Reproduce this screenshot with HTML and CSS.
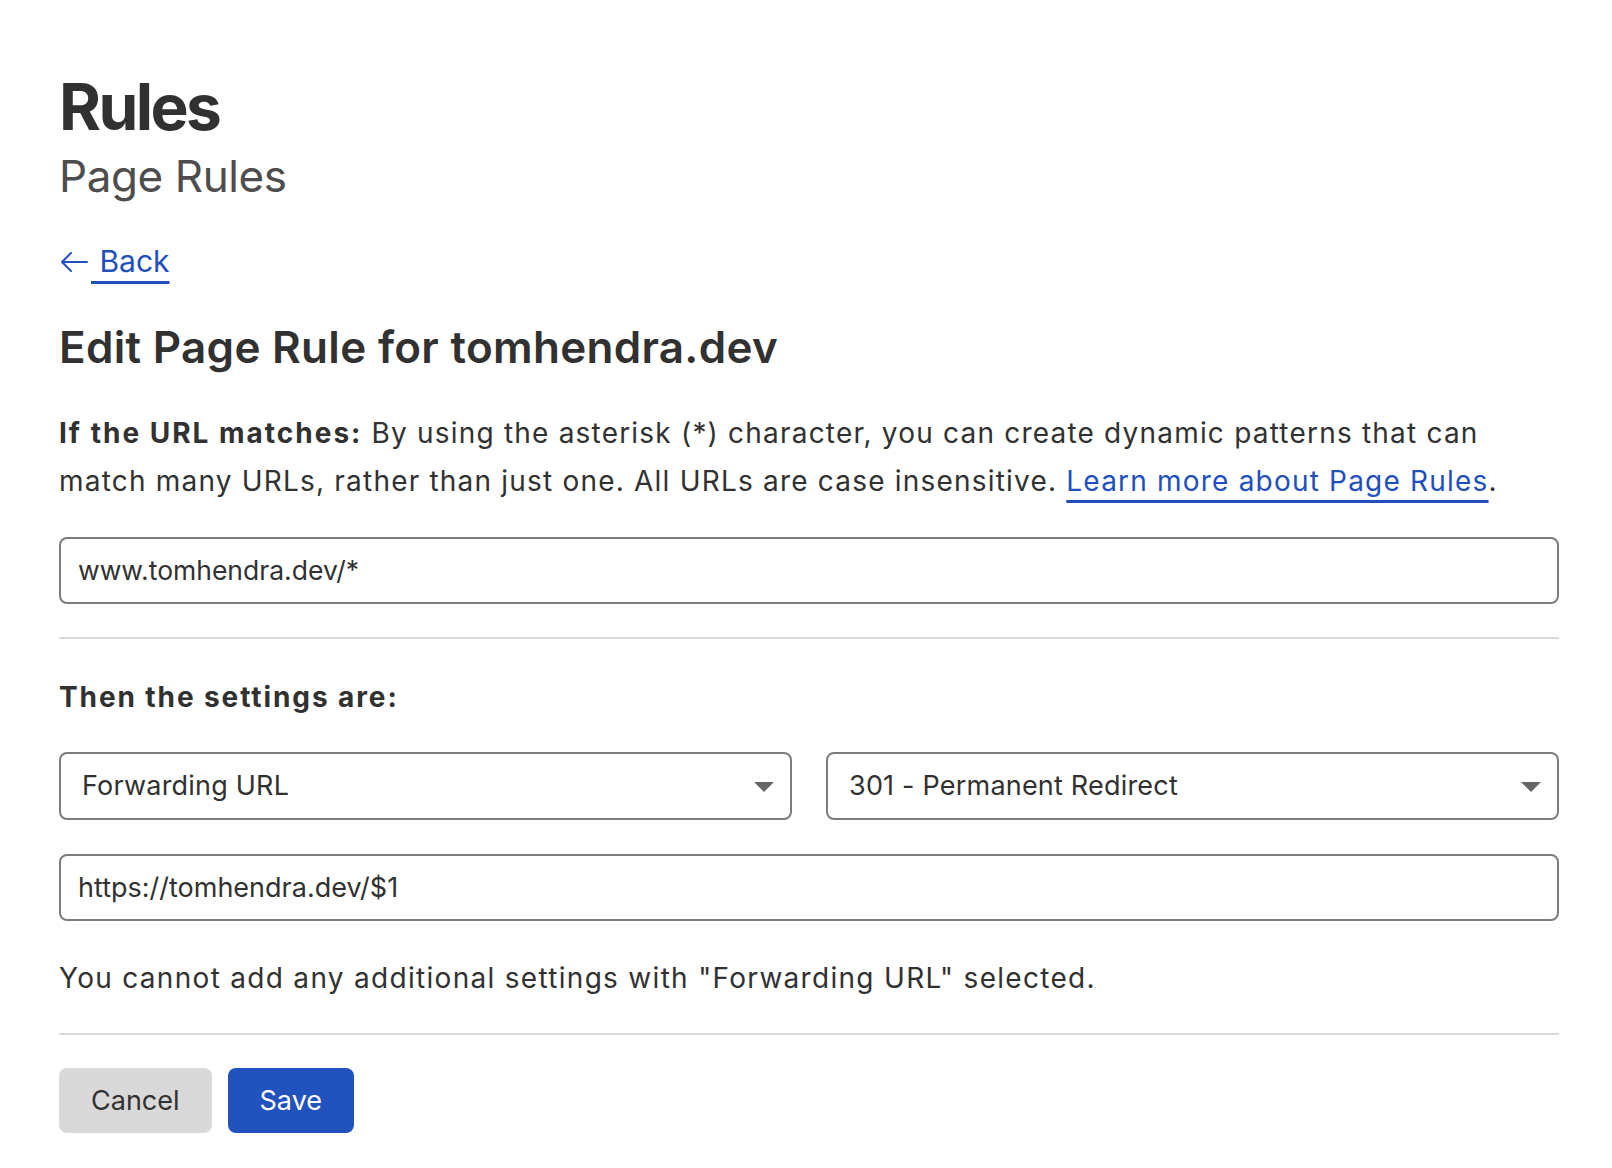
FILE: index.html
```html
<!DOCTYPE html>
<html lang="en">
<head>
<meta charset="utf-8">
<title>Rules – Page Rules</title>
<link rel="stylesheet" href="styles.css">
</head>
<body>
<div class="page">
  <header class="page-head">
    <h1 class="title">Rules</h1>
    <p class="subtitle">Page Rules</p>
  </header>

  <div class="back-row">
    <a class="back" href="#"><svg class="back-arrow" width="32" height="20" viewBox="0 0 32 20" aria-hidden="true"><path d="M3 10 H28 M12 1 L3 10 L12 19" fill="none" stroke="#2150bd" stroke-width="2" stroke-linecap="round" stroke-linejoin="round"/></svg><span class="back-text">&nbsp;Back</span></a>
  </div>

  <h2 class="edit-title">Edit Page Rule for tomhendra.dev</h2>

  <p class="desc"><strong>If the URL matches:</strong> By using the asterisk (*) character, you can create dynamic patterns that can match many URLs, rather than just one. All URLs are case insensitive. <a class="link" href="#">Learn more about Page Rules</a>.</p>

  <div class="field field-url">www.tomhendra.dev/*</div>

  <hr class="divider">

  <h3 class="settings-title">Then the settings are:</h3>

  <div class="select-row">
    <div class="select">Forwarding URL<span class="caret"></span></div>
    <div class="select">301 - Permanent Redirect<span class="caret"></span></div>
  </div>

  <div class="field field-dest">https://tomhendra.dev/$1</div>

  <p class="note">You cannot add any additional settings with "Forwarding URL" selected.</p>

  <hr class="divider divider-bottom">

  <div class="actions">
    <button class="btn btn-cancel" type="button">Cancel</button>
    <button class="btn btn-save" type="button">Save</button>
  </div>
</div>
</body>
</html>
```

FILE: styles.css
```css
* { box-sizing: border-box; }

html, body {
  margin: 0;
  padding: 0;
  background: #ffffff;
}

body {
  font-family: Inter, "Noto Sans", "Liberation Sans", sans-serif;
  color: #313131;
}

.page {
  padding: 75px 53px 0 59px;
  width: 1612px;
}

.title {
  margin: 0;
  font-size: 64px;
  line-height: 64px;
  font-weight: 700;
  letter-spacing: -2.6px;
  color: #313131;
}

.subtitle {
  margin: 11px 0 0;
  font-size: 44px;
  line-height: 52px;
  font-weight: 400;
  letter-spacing: -0.4px;
  color: #4d4d4d;
}

.back-row {
  margin-top: 39px;
  height: 40px;
  font-size: 30px;
  line-height: 40px;
}

.back {
  color: #2150bd;
  text-decoration: none;
}

.back-arrow {
  vertical-align: baseline;
}

.back-text {
  text-decoration: underline;
  text-decoration-thickness: 3px;
  text-underline-offset: 9px;
}

.edit-title {
  margin: 40px 0 0;
  font-size: 44px;
  line-height: 52px;
  font-weight: 600;
  letter-spacing: 0.3px;
  color: #313131;
}

.desc {
  margin: 36px 0 0;
  font-size: 28px;
  line-height: 48.3px;
  letter-spacing: 1.2px;
  color: #313131;
}

.desc strong {
  font-weight: 700;
  letter-spacing: 2px;
}

.link {
  color: #2150bd;
  text-decoration: underline;
  text-decoration-thickness: 3px;
  text-underline-offset: 9px;
}

.field {
  display: flex;
  align-items: center;
  height: 67px;
  border: 2px solid #7d7d7d;
  border-radius: 8px;
  padding: 0 17px;
  font-size: 27px;
  color: #313131;
}

.field-url {
  margin-top: 31px;
  font-size: 26.5px;
}

.divider {
  margin: 33px 0 0;
  border: 0;
  height: 2px;
  background: #d9d9d9;
}

.settings-title {
  margin: 38px 0 0;
  font-size: 28px;
  line-height: 40px;
  font-weight: 700;
  letter-spacing: 1.9px;
  color: #313131;
}

.select-row {
  margin-top: 35px;
  display: grid;
  grid-template-columns: 1fr 1fr;
  gap: 34px;
}

.select {
  position: relative;
  display: flex;
  align-items: center;
  height: 68px;
  border: 2px solid #7d7d7d;
  border-radius: 8px;
  padding: 0 60px 0 21px;
  font-size: 27px;
  letter-spacing: 0.2px;
  color: #313131;
}

.caret {
  position: absolute;
  right: 16px;
  top: 28px;
  width: 0;
  height: 0;
  border-left: 10px solid transparent;
  border-right: 10px solid transparent;
  border-top: 10px solid #666666;
}

.field-dest {
  margin-top: 34px;
}

.note {
  margin: 33px 0 0;
  font-size: 28px;
  line-height: 48px;
  letter-spacing: 1.3px;
  color: #313131;
}

.divider-bottom {
  margin-top: 31px;
}

.actions {
  margin-top: 33px;
  display: flex;
  gap: 16px;
}

.btn {
  height: 65px;
  padding: 0 32px;
  border: 0;
  border-radius: 8px;
  font-family: Inter, "Noto Sans", "Liberation Sans", sans-serif;
  font-size: 27px;
}

.btn-cancel {
  background: #d9d9d9;
  color: #313131;
}

.btn-save {
  background: #2252be;
  color: #ffffff;
}
```
